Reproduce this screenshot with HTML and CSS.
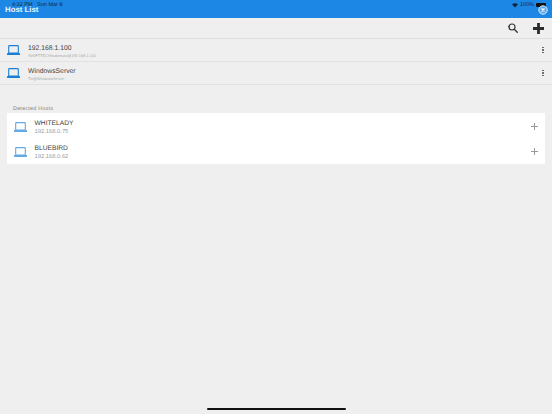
FILE: index.html
```html
<!DOCTYPE html>
<html lang="en">
<head>
    <meta charset="UTF-8">
    <title>Host List</title>
    <link rel="stylesheet" href="styles.css">
</head>
<body>
    <svg class="icon-defs" width="0" height="0">
        <symbol id="laptop" viewBox="0 0 13 10">
            <path d="M2.300.6h8.400a.6.6 0 0 1 .6.6v6.900H1.700V1.200a.6.6 0 0 1 .6-.6z" fill="none" stroke="currentColor" stroke-width="1.100"/>
            <rect x="0" y="7.900" width="13" height="2" rx=".5" fill="currentColor"/>
        </symbol>
    </svg>

    <div class="status-bar">
        <span class="status-time">4:32 PM&nbsp;&nbsp;&nbsp;Sun Mar 8</span>
        <div class="status-right">
            <svg class="wifi" viewBox="0 0 10 8" width="6" height="5"><path d="M5 7.500 0 2.500a7 7 0 0 1 10 0z" fill="#12283d"/></svg>
            <span>100%</span>
            <span class="battery"></span>
        </div>
        <svg class="close-badge" viewBox="0 0 12 12" width="10" height="10">
            <circle cx="6" cy="6" r="5" fill="#5aa7ec" stroke="#dcecfb" stroke-width="1.200"/>
            <path d="M4.200 4.200l3.600 3.600M7.800 4.200l-3.600 3.600" stroke="#fff" stroke-width="1.500"/>
        </svg>
    </div>

    <div class="header">Host List</div>

    <div class="toolbar">
        <svg class="tool-search" viewBox="0 0 10 10" width="10" height="10">
            <circle cx="4" cy="4" r="3" fill="none" stroke="#333" stroke-width="1.100"/>
            <path d="M6.300 6.300 9.700 9.700" stroke="#333" stroke-width="1.300"/>
            <path d="M0 3.800h2" stroke="#333" stroke-width="1"/>
        </svg>
        <svg class="tool-add" viewBox="0 0 11 11" width="11" height="11">
            <path d="M5.500 0v11M0 5.500h11" stroke="#2b2b2b" stroke-width="2.800"/>
        </svg>
    </div>

    <div class="saved-hosts">
        <div class="saved-row">
            <svg class="laptop-icon"><use href="#laptop"/></svg>
            <div class="saved-text">
                <div class="saved-name">192.168.1.100</div>
                <div class="saved-sub">SWIFTTECH\sakimoto@192.168.1.100</div>
            </div>
            <div class="dots"><i></i><i></i><i></i></div>
        </div>
        <div class="saved-row">
            <svg class="laptop-icon"><use href="#laptop"/></svg>
            <div class="saved-text">
                <div class="saved-name">WindowsServer</div>
                <div class="saved-sub">Tix@WindowsServer</div>
            </div>
            <div class="dots"><i></i><i></i><i></i></div>
        </div>
    </div>

    <div class="section-title">Detected Hosts</div>

    <div class="detected-card">
        <div class="detected-row">
            <svg class="laptop-icon light"><use href="#laptop"/></svg>
            <div class="detected-text">
                <div class="detected-name">WHITELADY</div>
                <div class="detected-ip">192.168.0.75</div>
            </div>
            <div class="plus"></div>
        </div>
        <div class="detected-row">
            <svg class="laptop-icon light"><use href="#laptop"/></svg>
            <div class="detected-text">
                <div class="detected-name">BLUEBIRD</div>
                <div class="detected-ip">192.168.0.62</div>
            </div>
            <div class="plus"></div>
        </div>
    </div>

    <div class="home-bar"></div>
</body>
</html>
```

FILE: styles.css
```css
html, body {
    margin: 0;
    padding: 0;
    height: 414px;
    overflow: hidden;
}
body {
    position: relative;
    font-family: "Liberation Sans", Arial, sans-serif;
    text-rendering: geometricPrecision;
    background-color: #efefef;
}
.icon-defs {
    position: absolute;
}
.status-bar {
    position: absolute;
    top: 0;
    left: 0;
    right: 0;
    height: 10px;
    color: #12283d;
    font-size: 5.500px;
    line-height: 10px;
}
.status-time {
    position: absolute;
    left: 12px;
}
.status-right {
    position: absolute;
    right: 6px;
    display: flex;
    align-items: center;
    gap: 2px;
    height: 10px;
}
.battery {
    width: 10px;
    height: 4px;
    background-color: #111;
    border-radius: 1px;
}
.close-badge {
    position: absolute;
    top: 5px;
    right: 4px;
}
.header {
    height: 18px;
    box-sizing: border-box;
    padding: 4px 0 0 5px;
    background-color: #1c87e5;
    color: #eaf4fd;
    font-size: 7.800px;
    font-weight: bold;
    line-height: 11px;
}
.toolbar {
    height: 20px;
    display: flex;
    align-items: center;
    justify-content: flex-end;
    gap: 15px;
    padding-right: 8px;
    border-bottom: 1px solid #dedede;
}
.saved-row {
    height: 22px;
    display: flex;
    align-items: center;
    padding: 0 8px 0 7px;
    border-bottom: 1px solid #e2e2e2;
}
.laptop-icon {
    width: 13px;
    height: 10px;
    flex-shrink: 0;
    color: #1c7fd6;
}
.laptop-icon.light {
    color: #64a9e4;
}
.saved-text {
    margin-left: 8px;
    padding-top: 2px;
    flex: 1;
}
.saved-name {
    font-size: 6.800px;
    line-height: 9px;
    color: #444;
}
.saved-sub {
    font-size: 3.900px;
    line-height: 5px;
    color: #aaa;
}
.dots {
    display: flex;
    flex-direction: column;
    gap: 1px;
    width: 2px;
}
.dots i {
    width: 1.500px;
    height: 1.500px;
    background-color: #555;
    border-radius: 50%;
}
.section-title {
    margin: 20px 0 0 13px;
    height: 8px;
    font-size: 5.300px;
    line-height: 9px;
    letter-spacing: 0.3px;
    color: #808080;
}
.detected-card {
    margin: 0 7px;
    padding-top: 1px;
    background-color: #fff;
}
.detected-row {
    height: 25px;
    display: flex;
    align-items: center;
    padding: 0 7px;
}
.detected-text {
    margin-left: 7.500px;
    margin-top: 1px;
    flex: 1;
}
.detected-name {
    font-size: 6.700px;
    line-height: 9px;
    color: #444;
}
.detected-ip {
    font-size: 5.800px;
    line-height: 8px;
    color: #999;
}
.plus {
    width: 7px;
    height: 7px;
    background:
        linear-gradient(#999, #999) center / 7px 1px no-repeat,
        linear-gradient(#999, #999) center / 1px 7px no-repeat;
}
.home-bar {
    position: absolute;
    left: 207px;
    bottom: 4px;
    width: 139px;
    height: 2px;
    background-color: #111;
    border-radius: 1px;
}
```
